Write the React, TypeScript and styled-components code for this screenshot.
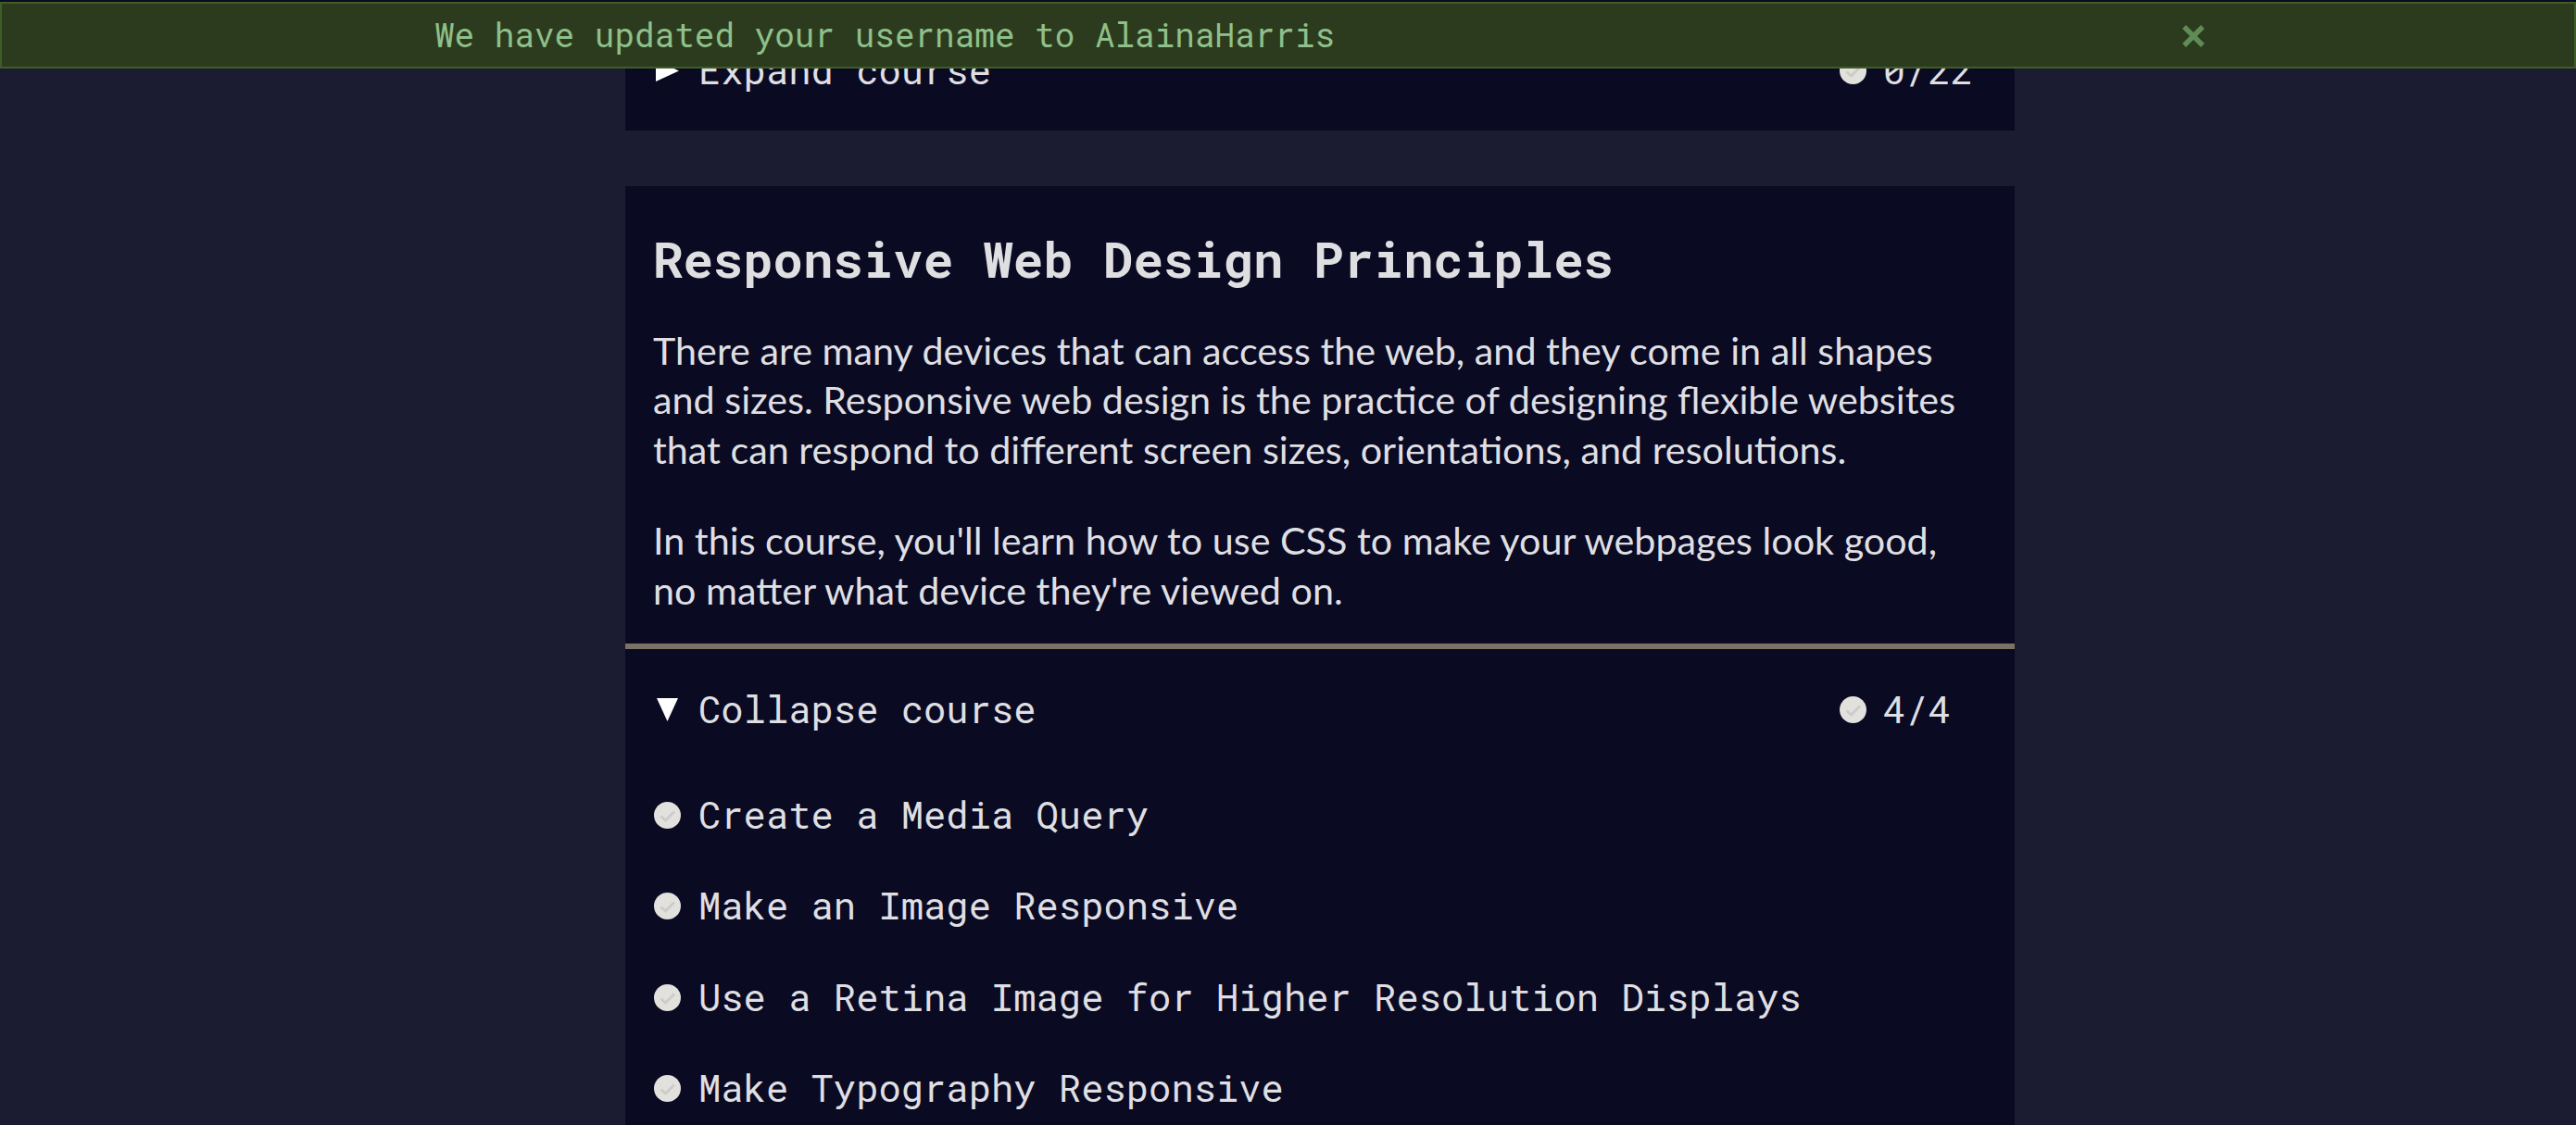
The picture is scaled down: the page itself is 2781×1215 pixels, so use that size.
import styled, { createGlobalStyle } from 'styled-components';

const GlobalStyle = createGlobalStyle`
  html, body {
    margin: 0;
    padding: 0;
    background-color: #1b1b32;
    overflow: hidden;
  }
  * {
    box-sizing: border-box;
  }
`;

const S = {
  FlashBar: styled.div`
    position: fixed;
    top: 0;
    left: 0;
    right: 0;
    padding-top: 2px;
    background-color: #0a0a23;
    z-index: 10;
  `,
  Flash: styled.div`
    height: 72px;
    background-color: #2c3b1d;
    border: 2px solid #3e5e26;
    padding-left: 69px;
    display: flex;
    justify-content: center;
  `,
  FlashInner: styled.div`
    width: 1912px;
    display: flex;
    align-items: center;
    justify-content: space-between;
  `,
  FlashText: styled.span`
    font-family: 'Roboto Mono', 'DejaVu Sans Mono', monospace;
    font-size: 36px;
    line-height: 1.2;
    color: #8fc08b;
  `,
  CloseButton: styled.button`
    background: none;
    border: none;
    padding: 0;
    margin-top: 1px;
    display: flex;
    cursor: pointer;
  `,
  Main: styled.main`
    padding-left: 69px;
    display: flex;
    justify-content: center;
  `,
  Column: styled.div`
    width: 1500px;
    display: flex;
    flex-direction: column;
    gap: 60px;
  `,
  Card: styled.section<{ $top?: number }>`
    background-color: #0a0a23;
    padding-top: ${({ $top }) => $top ?? 0}px;
  `,
  Intro: styled.div`
    padding: 46px 45px 31px 30px;
  `,
  Title: styled.h2`
    margin: 0 0 40px;
    font-family: 'Roboto Mono', 'DejaVu Sans Mono', monospace;
    font-size: 54px;
    font-weight: 700;
    line-height: 1.2;
    color: #dfdfe2;
  `,
  Para: styled.p`
    margin: 0;
    font-family: Lato, 'Noto Sans', sans-serif;
    font-size: 41.3px;
    line-height: 53.5px;
    color: #dfdfe2;
    & + & {
      margin-top: 45px;
    }
  `,
  Toggle: styled.div<{ $divider?: boolean }>`
    height: ${({ $divider }) => ($divider ? 136 : 130)}px;
    border-top: ${({ $divider }) => ($divider ? '6px solid #7a7262' : 'none')};
    padding: 0 45px 0 31px;
    display: flex;
    align-items: center;
    justify-content: space-between;
  `,
  Label: styled.span`
    display: flex;
    align-items: center;
    gap: 19px;
    font-family: 'Roboto Mono', 'DejaVu Sans Mono', monospace;
    font-size: 40.5px;
    line-height: 1.2;
    color: #dfdfe2;
  `,
  IconSlot: styled.span`
    width: 29px;
    height: 29px;
    display: flex;
    align-items: center;
    justify-content: center;
    flex-shrink: 0;
  `,
  Progress: styled.span`
    display: flex;
    align-items: center;
    gap: 18px;
    font-family: 'Roboto Mono', 'DejaVu Sans Mono', monospace;
    font-size: 40.5px;
    line-height: 1.2;
    color: #dfdfe2;
  `,
  Count: styled.span`
    min-width: 4ch;
  `,
  List: styled.ul`
    list-style: none;
    margin: 0;
    padding: 0;
  `,
  Item: styled.li`
    height: 98.3px;
    padding: 0 31px;
    display: flex;
    align-items: center;
  `,
};

const CheckCircle = () => (
  <svg width="29" height="29" viewBox="0 0 29 29">
    <circle cx="14.5" cy="14.5" r="14.5" fill="#e2e1de" />
    <path d="M7.5 15.5 L12.5 20 L22 10.5" fill="none" stroke="#cdccc9" strokeWidth="3" />
  </svg>
);

const Caret = ({ open }: { open: boolean }) => (
  <svg
    width="23"
    height="25"
    viewBox="0 0 23 25"
    style={{ transform: open ? 'none' : 'rotate(-90deg)' }}
  >
    <polygon points="0,0 23,0 11.5,25" fill="#ffffff" />
  </svg>
);

const CloseIcon = () => (
  <svg width="26" height="26" viewBox="0 0 26 26">
    <path d="M3 3 L23 23 M23 3 L3 23" stroke="#5f8b55" strokeWidth="5.5" />
  </svg>
);

interface IToggleProps {
  open: boolean;
  done: string;
  divider?: boolean;
}

const CourseToggle = ({ open, done, divider }: IToggleProps) => (
  <S.Toggle $divider={divider}>
    <S.Label>
      <S.IconSlot>
        <Caret open={open} />
      </S.IconSlot>
      {open ? 'Collapse course' : 'Expand course'}
    </S.Label>
    <S.Progress>
      <CheckCircle />
      <S.Count>{done}</S.Count>
    </S.Progress>
  </S.Toggle>
);

const challenges = [
  'Create a Media Query',
  'Make an Image Responsive',
  'Use a Retina Image for Higher Resolution Displays',
  'Make Typography Responsive',
];

const App = () => {
  return (
    <>
      <GlobalStyle />
      <S.FlashBar>
        <S.Flash>
          <S.FlashInner>
            <S.FlashText>We have updated your username to AlainaHarris</S.FlashText>
            <S.CloseButton aria-label="close">
              <CloseIcon />
            </S.CloseButton>
          </S.FlashInner>
        </S.Flash>
      </S.FlashBar>
      <S.Main>
        <S.Column>
          <S.Card $top={11}>
            <CourseToggle open={false} done="0/22" />
          </S.Card>
          <S.Card>
            <S.Intro>
              <S.Title>Responsive Web Design Principles</S.Title>
              <S.Para>
                There are many devices that can access the web, and they come in all shapes and
                sizes. Responsive web design is the practice of designing flexible websites that
                can respond to different screen sizes, orientations, and resolutions.
              </S.Para>
              <S.Para>
                In this course, you'll learn how to use CSS to make your webpages look good, no
                matter what device they're viewed on.
              </S.Para>
            </S.Intro>
            <CourseToggle open done="4/4" divider />
            <S.List>
              {challenges.map((title) => (
                <S.Item key={title}>
                  <S.Label>
                    <S.IconSlot>
                      <CheckCircle />
                    </S.IconSlot>
                    {title}
                  </S.Label>
                </S.Item>
              ))}
            </S.List>
          </S.Card>
        </S.Column>
      </S.Main>
    </>
  );
};

export default App;
